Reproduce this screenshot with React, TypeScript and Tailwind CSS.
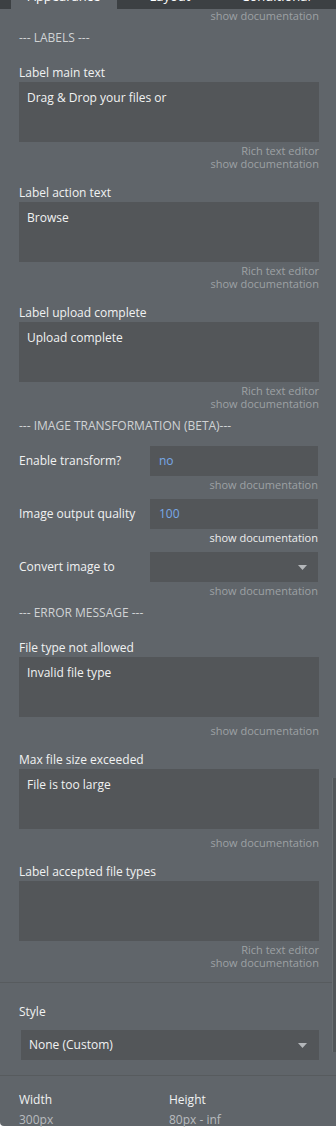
const font = { fontFamily: '"Open Sans", "Liberation Sans", sans-serif' };

function Doc({ rich, className = '' }: { rich?: boolean; className?: string }) {
  return (
    <div className={`flex flex-col items-end text-[11px] leading-[13px] text-[#9da1a4] ${className}`}>
      {rich && <span>Rich text editor</span>}
      <span>show documentation</span>
    </div>
  );
}

function Caret() {
  return (
    <svg width="9" height="5" viewBox="0 0 9 5" className="shrink-0">
      <path d="M0 0h9L4.5 5z" fill="#b4b7ba" />
    </svg>
  );
}

function TextField({ label, value, rich, className = '' }: { label: string; value?: string; rich?: boolean; className?: string }) {
  return (
    <div className={className}>
      <div className="text-[12px] leading-[18px] text-[#f1f2f2]">{label}</div>
      <div className="h-[60px] bg-[#535659] pl-[8px] pt-[7px] text-[12px] leading-[17px] text-[#f1f2f2]">
        {value}
      </div>
      {rich ? <Doc rich className="mt-[2px]" /> : <Doc className="mt-[7px]" />}
    </div>
  );
}

function Row({ label, children, docBright }: { label: string; children?: React.ReactNode; docBright?: boolean }) {
  return (
    <div>
      <div className="flex items-center">
        <div className="w-[131px] shrink-0 text-[12px] leading-[16px] text-[#f1f2f2]">{label}</div>
        <div className="mr-[1px] flex h-[30px] flex-1 items-center justify-between bg-[#535659] pl-[9px] pr-[11px] text-[12px] text-[#78a9e8]">
          {children}
        </div>
      </div>
      <div className={`mt-[2px] mr-[1px] text-right text-[11px] leading-[13px] ${docBright ? 'text-[#eeeeee]' : 'text-[#9da1a4]'}`}>
        show documentation
      </div>
    </div>
  );
}

function Header({ text, className = '' }: { text: string; className?: string }) {
  return <div className={`text-[12px] leading-[16px] text-[#d0d3d5] ${className}`}>{text}</div>;
}

export default function App() {
  return (
    <div className="relative h-[1132px] w-[336px] overflow-hidden bg-white" style={font}>
      {/* tabs, scrolled so only the bottom of the labels shows */}
      <div className="flex h-[13px] overflow-hidden bg-[#3c4043] pl-[11px]">
        {['Appearance', 'Layout', 'Conditional'].map((t, i) => (
          <div
            key={t}
            className={`-mt-[12px] h-[25px] w-[106px] text-center text-[13px] leading-[16px] text-white ${i === 0 ? 'bg-[#60656a]' : ''}`}
          >
            {t}
          </div>
        ))}
      </div>

      <div className="h-[1117px] rounded-bl-[4px] bg-[#60656a]">
        <div className="pl-[19px] pr-[17px]">
          <Doc className="-mt-[4px]" />
          <Header text="--- LABELS ---" className="mt-[8px]" />
          <TextField label="Label main text" value="Drag & Drop your files or" rich className="mt-[18px]" />
          <TextField label="Label action text" value="Browse" rich className="mt-[14px]" />
          <TextField label="Label upload complete" value="Upload complete" rich className="mt-[14px]" />
          <Header text="--- IMAGE TRANSFORMATION (BETA)---" className="mt-[8px]" />
          <div className="mt-[12px] flex flex-col gap-[8px]">
            <Row label="Enable transform?">no</Row>
            <Row label="Image output quality" docBright>100</Row>
            <Row label="Convert image to">
              <span />
              <Caret />
            </Row>
          </div>
          <Header text="--- ERROR MESSAGE ---" className="mt-[8px]" />
          <TextField label="File type not allowed" value="Invalid file type" className="mt-[18px]" />
          <TextField label="Max file size exceeded" value="File is too large" className="mt-[14px]" />
          <TextField label="Label accepted file types" rich className="mt-[14px]" />
        </div>

        <div className="mt-[13px] h-px bg-[#575b5e]" />

        <div className="pl-[19px] pr-[17px]">
          <div className="mt-[21px] text-[12px] leading-[16px] text-[#f1f2f2]">Style</div>
          <div className="ml-[2px] mt-[10px] flex h-[30px] items-center justify-between bg-[#535659] pl-[8px] pr-[12px] text-[12px] text-[#f1f2f2]">
            <span>None (Custom)</span>
            <Caret />
          </div>
        </div>

        <div className="mt-[15px] h-px bg-[#575b5e]" />

        <div className="mt-[16px] flex pl-[19px] text-[12px] leading-[16px]">
          <div className="w-[150px]">
            <div className="text-[#f1f2f2]">Width</div>
            <div className="mt-[4px] text-[#b9bcbf]">300px</div>
          </div>
          <div>
            <div className="text-[#f1f2f2]">Height</div>
            <div className="mt-[4px] text-[#b9bcbf]">80px - inf</div>
          </div>
        </div>
      </div>

      {/* scrollbar */}
      <div className="absolute right-0 top-[778px] h-[274px] w-[4px] border-l border-[#6a6f72] bg-[#525659]" />
    </div>
  );
}
